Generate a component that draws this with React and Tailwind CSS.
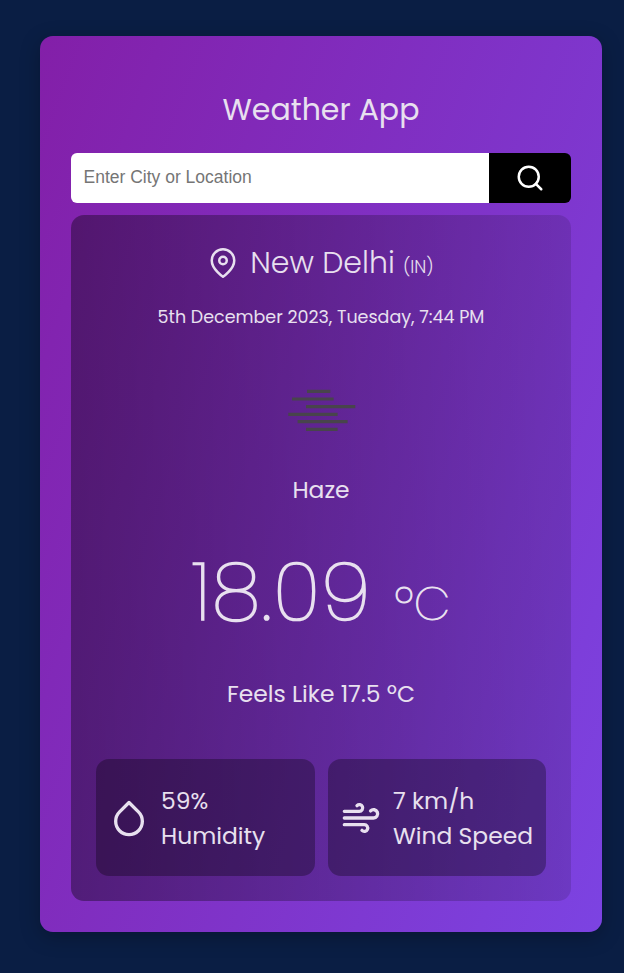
import { FiDroplet, FiMapPin, FiSearch, FiWind } from "react-icons/fi";

function HazeIcon() {
  return (
    <svg className="h-[50px] w-[70px]" viewBox="0 0 70 50" fill="none" stroke="#48444c" strokeWidth="3.2">
      <path d="M21.7 6.3H45M6.7 14H48.3M20.7 21.7H70M3 29.3H52.3M12.3 36.7H62.3M20.7 44.3H52.3" transform="translate(-0.7 0)" />
    </svg>
  );
}

function Stat({ icon, value, label, pad }) {
  return (
    <div className={`flex h-[117px] items-center gap-3 rounded-[13px] bg-black/30 ${pad}`}>
      <span className="size-10 shrink-0">{icon}</span>
      <div className="pt-px text-[23.4px] leading-[35px] whitespace-nowrap">
        <p>{value}</p>
        <p>{label}</p>
      </div>
    </div>
  );
}

export default function App() {
  return (
    <div className="h-[973px] w-[624px] bg-[#0a1e44] pt-9 pr-[22px] pl-10 font-[Poppins,Inter,sans-serif] text-[#e8e0ef]">
      <main className="flex h-[896px] flex-col rounded-[13px] bg-[linear-gradient(110deg,#831fa8,#7c43e2)] px-[31px] pt-[50px] shadow-[0_5px_20px_rgba(0,0,0,0.25)]">
        <h1 className="text-center text-[30px] leading-[48px]">Weather App</h1>
        <form className="mt-[19px] flex h-[50px] overflow-hidden rounded-md">
          <input
            className="w-[418px] bg-white pr-3 pb-0.5 pl-[12.5px] font-['Liberation_Sans',sans-serif] text-[17.5px] text-black outline-none placeholder:text-[#757575]"
            placeholder="Enter City or Location"
          />
          <button type="button" className="flex flex-1 items-center justify-center bg-black text-white">
            <FiSearch size={30} />
          </button>
        </form>
        <section className="mt-3 flex h-[686px] flex-col items-center rounded-[13px] bg-[linear-gradient(90deg,rgba(0,0,0,0.37),rgba(0,0,0,0.13))] pt-6">
          <div className="flex h-12 items-center font-light">
            <FiMapPin size={30} />
            <h2 className="ml-3 pt-1 text-[30px] leading-[48px] whitespace-nowrap">
              New Delhi <span className="text-[17.5px]">(IN)</span>
            </h2>
          </div>
          <p className="mt-[17px] text-[17.5px] leading-[26px] whitespace-nowrap">5th December 2023, Tuesday, 7:44 PM</p>
          <div className="mt-[55px]">
            <HazeIcon />
          </div>
          <p className="mt-[37px] text-[23.4px] leading-9">Haze</p>
          <div className="mt-[24px] flex h-[120px] items-baseline font-extralight whitespace-nowrap">
            <span className="text-[80px] leading-[120px] tracking-[1.6px] [-webkit-text-stroke:1.7px_#e8e0ef]">18.09</span>
            <span className="ml-[22px] text-[47px] [-webkit-text-stroke:1px_#e8e0ef]">ºC</span>
          </div>
          <p className="mt-[24px] text-[23.4px] leading-9">Feels Like 17.5 ºC</p>
          <div className="mt-[47px] flex gap-[13px]">
            <Stat pad="w-[219px] pl-[13px]" icon={<FiDroplet size={40} />} value="59%" label="Humidity" />
            <Stat pad="w-[218px] pl-[13px]" icon={<FiWind size={40} />} value="7 km/h" label="Wind Speed" />
          </div>
        </section>
      </main>
    </div>
  );
}
